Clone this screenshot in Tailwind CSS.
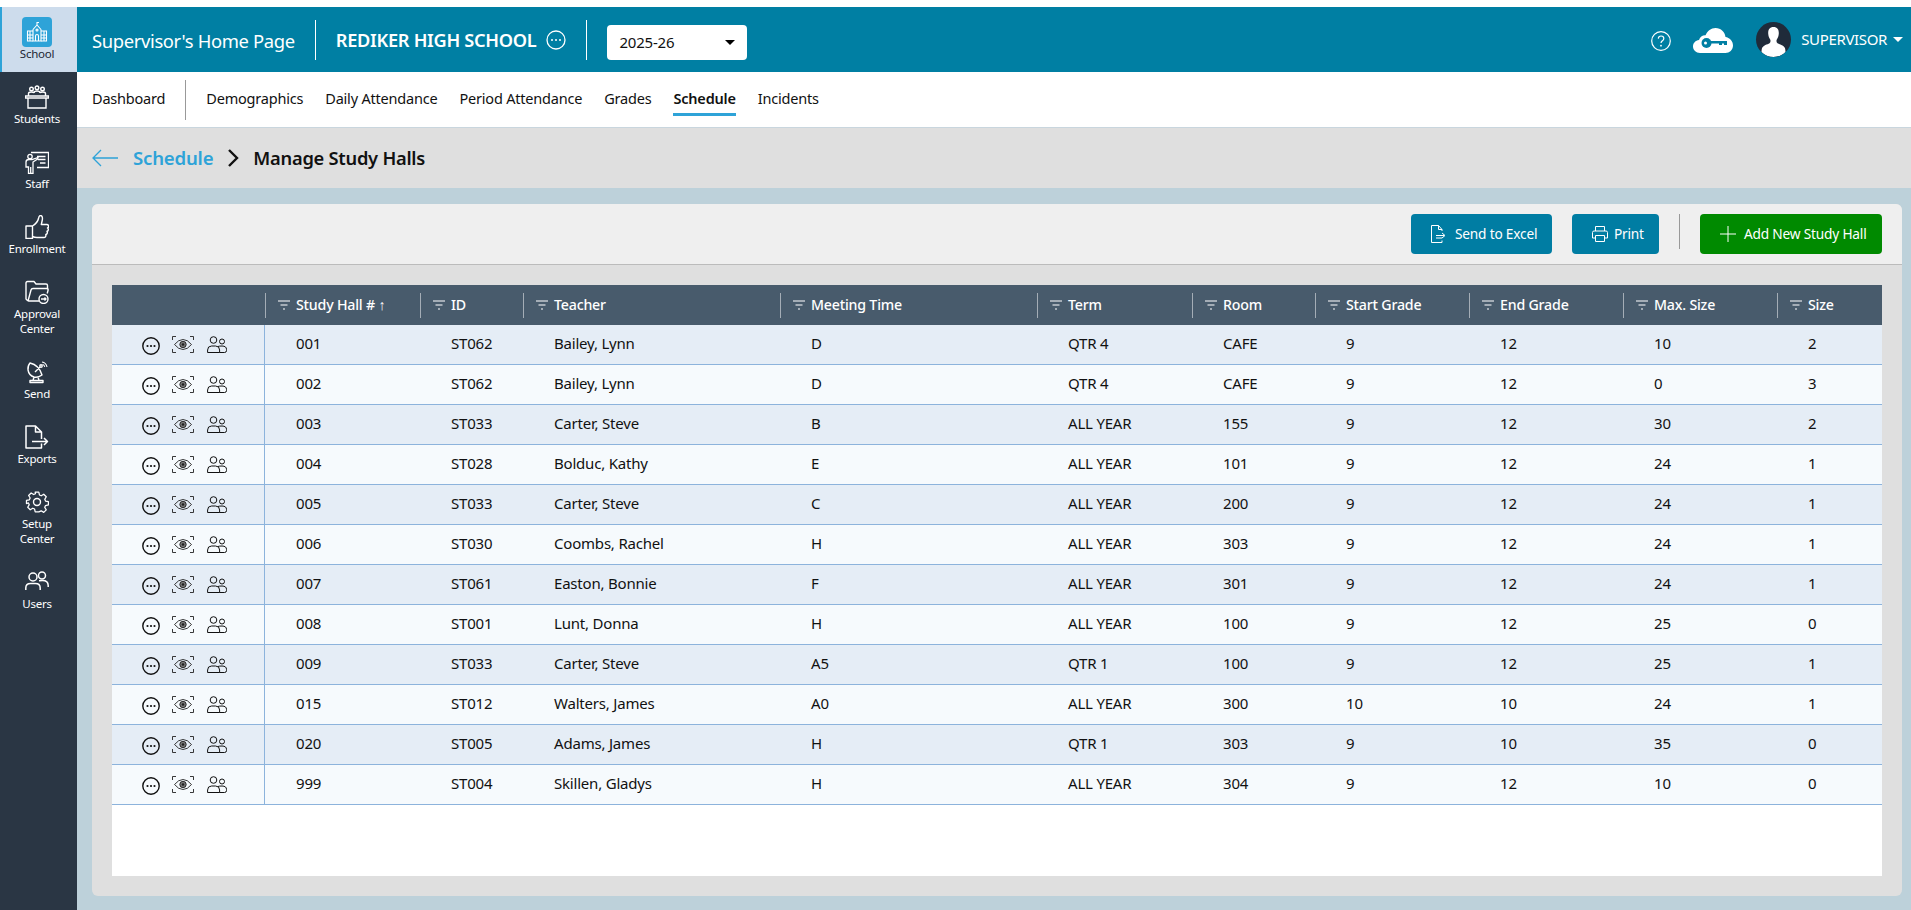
<!DOCTYPE html>
<html lang="en">
<head>
    <meta charset="UTF-8"/>
    <title>Manage Study Halls</title>
    <script src="https://cdn.jsdelivr.net/npm/@tailwindcss/browser@4"></script>
</head>
<body class="bg-white h-[910px] overflow-hidden pt-[7px] flex font-['Noto_Sans',sans-serif] text-[15px] text-[#111]">

<!-- left rail -->
<nav class="w-[77px] shrink-0 bg-[#2a3644] text-white text-[11.5px] leading-[15px] tracking-[-0.25px] text-center">
    <div class="h-[65px] bg-[#cddcec] border-l-2 border-[#2ea3d8] text-[#1c2733] pr-[5px] pt-[10px]">
        <div class="w-[30px] h-[30px] mx-auto rounded-[4px] bg-[#2ea3d8] flex items-center justify-center">
            <svg class="w-[24px] h-[24px]" viewBox="0 0 24 24" fill="none" stroke="white" stroke-width="1.100"><path d="M8 9.500 12 5l4 4.500M12 5V2.500h2M8 9.500V21h8V9.500"/><path d="M8 11H2.500v10H8M16 11h5.500v10H16M2.500 15h5.500M2.500 18h5.500M16 15h5.500M16 18h5.500M5 11v10M19 11v10M10.500 21v-5a1.500 1.500 0 0 1 3 0v5"/><circle cx="12" cy="10" r="1"/></svg>
        </div>
        <div class="-mt-[1px]">School</div>
    </div>
    <div class="pt-[13px] pb-[11px] pr-[3px]">
        <svg class="block mx-auto w-6 h-6" viewBox="0 0 24 24" fill="none" stroke="white" stroke-width="1.400"><circle cx="6.500" cy="4" r="1.800"/><circle cx="12" cy="2.800" r="1.800"/><circle cx="17.500" cy="4" r="1.800"/><path d="M3.500 11V8.500q0-1.500 3-1.500 2 0 2.500 1M9 8q0-2 3-2t3 2M15 8q.5-1 2.500-1 3 0 3 1.500V11M.5 11h23v2H.5zM3 13v10h18V13"/></svg>
        <div class="mt-[2px]">Students</div>
    </div>
    <div class="pt-[13px] pb-[11px] pr-[3px]">
        <svg class="block mx-auto w-6 h-6" viewBox="0 0 24 24" fill="none" stroke="white" stroke-width="1.300"><path d="M6 2.500h17.500v15H12M12 6.500h8.500M13 9.500h7.500M15 13h5.500"/><circle cx="5" cy="6.500" r="2.200"/><path d="M1 17v-5q0-2.500 3-2.500h3l6-2-.5 1.500L8 12v11.500H3.500V17zM5.700 17v6.500"/></svg>
        <div class="mt-[2px]">Staff</div>
    </div>
    <div class="pt-[13px] pb-[11px] pr-[3px]">
        <svg class="block mx-auto w-6 h-6" viewBox="0 0 24 24" fill="none" stroke="white" stroke-width="1.400" stroke-linejoin="round"><path d="M7.500 11H1v12.500h6.500zM7.500 11q5-3 6-7.500c.3-1.800 1-3 2-3 1.500 0 2.300 2 1.800 4.500l-1 4.500h5.500c2.200 0 2.200 3 .7 3.500 1.300.8 1 3-.5 3.300.8 1.200.2 3-1.200 3.200.4 1.500-.3 3-2 3H12q-2.500 0-4.500-1.200"/></svg>
        <div class="mt-[2px]">Enrollment</div>
    </div>
    <div class="pt-[13px] pb-[11px] pr-[3px]">
        <svg class="block mx-auto w-6 h-6" viewBox="0 0 24 24" fill="none" stroke="white" stroke-width="1.400" stroke-linejoin="round"><path d="M3 21 1 19V3q0-1.500 1.500-1.500H9L11 4h10q1.500 0 1.500 1.500V9"/><path d="M3 21l3-11q.4-1.500 2-1.500h13.500q2 0 1.500 2l-.8 3M3 21h11"/><circle cx="18.500" cy="19" r="4.500"/><path d="M16 19h5M19.500 17.500 21 19l-1.500 1.500"/></svg>
        <div class="mt-[2px]">Approval<br/>Center</div>
    </div>
    <div class="pt-[13px] pb-[11px] pr-[3px]">
        <svg class="block mx-auto w-6 h-6" viewBox="0 0 24 24" fill="none" stroke="white" stroke-width="1.400" stroke-linejoin="round"><path d="M5 3q9 2 12 12-4 3-8 2-5-1.500-6-7-.5-4 2-7zM10 12l5-5M9 17l-1 3.500M13 17l1 3.500M5 20.500h13v2H5z"/><circle cx="16" cy="6" r="1.200"/><path d="M17 2q4 .5 5 5M17.500 4.500q1.800.3 2.200 2.300" stroke-width="1.100"/></svg>
        <div class="mt-[2px]">Send</div>
    </div>
    <div class="pt-[13px] pb-[11px] pr-[3px]">
        <svg class="block mx-auto w-6 h-6" viewBox="0 0 24 24" fill="none" stroke="white" stroke-width="1.500" stroke-linejoin="round"><path d="M16.500 14V7l-6-6H1v22h15.500v-4.500M10.500 1v6h6"/><path d="M7 16.500h15M19 13l3.500 3.500L19 20"/></svg>
        <div class="mt-[2px]">Exports</div>
    </div>
    <div class="pt-[13px] pb-[11px] pr-[3px]">
        <svg class="block mx-auto w-6 h-6" viewBox="0 0 24 24" fill="none" stroke="white" stroke-width="1.400" stroke-linejoin="round"><circle cx="12" cy="12" r="3.500"/><path d="M10 1h4l.7 3.200 2 .9 2.800-1.700 2.800 2.800-1.700 2.800.9 2 3.200.7v3.500l-3.200.7-.9 2 1.700 2.800-2.800 2.800-2.800-1.700-2 .9L14 23h-4l-.7-3.200-2-.9-2.800 1.700-2.800-2.800 1.700-2.800-.9-2L.3 13.800v-3.500l3.200-.7.900-2-1.700-2.800 2.800-2.800 2.800 1.700 2-.9z" transform="translate(1.200 1.200) scale(.9)"/></svg>
        <div class="mt-[2px]">Setup<br/>Center</div>
    </div>
    <div class="pt-[13px] pb-[11px] pr-[3px]">
        <svg class="block mx-auto w-6 h-6" viewBox="0 0 24 24" fill="none" stroke="white" stroke-width="1.500"><circle cx="8" cy="7" r="4"/><circle cx="17" cy="5.500" r="3.500"/><path d="M.8 20v-2q0-4.500 4.700-4.500h5q4.700 0 4.700 4.500v2M14 10.700q1.300-.2 3.500-.2 5.700 0 5.700 5v1.500"/></svg>
        <div class="mt-[2px]">Users</div>
    </div>
</nav>

<div class="flex-1 min-w-0 flex flex-col bg-[#bdd1da]">
    <!-- top bar -->
    <header class="h-[65px] shrink-0 bg-[#007fa3] text-white flex items-center pl-[15px] pr-[8px]">
        <span class="text-[18.4px] tracking-[-0.35px] pt-[2px]">Supervisor's Home Page</span>
        <div class="w-px h-[40px] bg-white ml-[20px] mr-[20px]"></div>
        <span class="text-[18.200px] font-semibold tracking-[-0.3px] pt-[2px]">REDIKER HIGH SCHOOL</span>
        <svg class="w-[20px] h-[20px] ml-[10px] mt-[1px]" viewBox="0 0 20 20" fill="none" stroke="white" stroke-width="1.300"><circle cx="10" cy="10" r="9"/><circle cx="6" cy="10" r="1" fill="white" stroke="none"/><circle cx="10" cy="10" r="1" fill="white" stroke="none"/><circle cx="14" cy="10" r="1" fill="white" stroke="none"/></svg>
        <div class="w-px h-[40px] bg-white ml-[20px] mr-[20px]"></div>
        <div class="w-[140px] h-[35px] mt-[6px] bg-white rounded-[4px] text-[#111] flex items-center justify-between pl-[12px] pr-[12px]">
            <span class="tracking-[-0.2px]">2025-26</span>
            <span class="w-0 h-0 border-x-[5px] border-x-transparent border-t-[5px] border-t-black"></span>
        </div>
        <div class="ml-auto flex items-center">
            <svg class="w-[20px] h-[20px] mt-[2px]" viewBox="0 0 20 20" fill="none" stroke="white" stroke-width="1.200"><circle cx="10" cy="10" r="9.300"/><path d="M7.300 7.600C7.400 5.800 8.600 5 10.100 5c1.600 0 2.700 1 2.700 2.400 0 2.300-2.800 2.300-2.800 4.600"/><circle cx="10" cy="14.700" r=".9" fill="white" stroke="none"/></svg>
            <svg class="w-[40px] h-[25px] ml-[22px] mt-[1px]" viewBox="0 0 40 25"><path fill="white" d="M7 25C3 25 0 22 0 18.500S2.500 12.500 6 12c1-3 3.500-5 6.500-4.800C14.500 3 18 0 22.500 0c5.500 0 9.500 4 10 9 4 .5 7.500 4 7.500 8.500 0 4.500-3.500 7.500-7.500 7.500z"/><circle cx="13.500" cy="15" r="5" fill="#007fa3"/><circle cx="12.500" cy="15" r="1.500" fill="white"/><path fill="#007fa3" d="M17 13h17v4h-3v-1.500h-2V17h-3v-1.500h-9z"/></svg>
            <div class="w-[35px] h-[35px] rounded-full bg-[#1f2b3a] ml-[23px] overflow-hidden flex justify-center">
                <svg class="w-[35px] h-[35px]" viewBox="0 0 35 35"><path fill="white" d="M17.500 5c4 0 5.500 3 5.300 6.500-.1 2.500-1 4.500-2 6-.6 1.500-.4 3 .7 3.800 2 1.300 6.500 2 7.500 5 .4 1.500.5 3 .5 4-3 3-7 4.700-12 4.700s-9-1.700-12-4.700c0-1 .1-2.500.5-4 1-3 5.500-3.700 7.500-5 1.100-.8 1.300-2.300.7-3.800-1-1.500-1.900-3.500-2-6C12 8 13.500 5 17.500 5z"/></svg>
            </div>
            <span class="ml-[10px] tracking-[-0.35px] text-[15px]">SUPERVISOR</span>
            <span class="ml-[6px] w-0 h-0 border-x-[5px] border-x-transparent border-t-[5px] border-t-white"></span>
        </div>
    </header>

    <!-- sub nav -->
    <div class="h-[56px] shrink-0 bg-white border-b border-[#c9d6de] flex items-center pl-[15px] text-[14.500px] tracking-[-0.2px]">
        <span class="pb-[2px]">Dashboard</span>
        <div class="w-px h-[40px] bg-[#999] ml-[20px] mr-[20px]"></div>
        <div class="flex items-center gap-[22px] pb-[2px]">
            <span>Demographics</span>
            <span>Daily Attendance</span>
            <span>Period Attendance</span>
            <span>Grades</span>
            <span class="relative font-semibold">Schedule<span class="absolute left-0 right-0 top-[25px] h-[3px] bg-[#2ea3d8]"></span></span>
            <span>Incidents</span>
        </div>
    </div>

    <!-- breadcrumb -->
    <div class="h-[60px] shrink-0 bg-[#dfdfdf] flex items-center pl-[15px]">
        <svg class="w-[26px] h-[18px]" viewBox="0 0 26 18" fill="none" stroke="#2ea3d8" stroke-width="1.300"><path d="M26 9H1M9 1 1 9l8 8"/></svg>
        <span class="ml-[15px] text-[#2ea3d8] text-[18.600px] font-semibold tracking-[-0.2px]">Schedule</span>
        <svg class="ml-[14px] w-[12px] h-[18px]" viewBox="0 0 12 18" fill="none" stroke="#111" stroke-width="2.400"><path d="m2 1 8 8-8 8"/></svg>
        <span class="ml-[14px] text-[18.300px] font-semibold tracking-[-0.25px]">Manage Study Halls</span>
    </div>

    <!-- card -->
    <main class="flex-1 min-h-0 ml-[15px] mr-[9px] mt-[16px] mb-[14px] rounded-[6px] bg-[#dfdfdf] flex flex-col overflow-hidden">
        <div class="h-[61px] shrink-0 bg-[#efefef] border-b border-[#bbb] flex items-start pt-[10px] justify-end pr-[20px] text-white tracking-[-0.2px] text-[13.700px]">
            <div class="w-[141px] h-[40px] rounded-[4px] bg-[#007da3] flex items-center pl-[20px]">
                <svg class="w-[16px] h-[18px]" viewBox="0 0 16 18" fill="none" stroke="white" stroke-width="1"><path d="M11 6V4.500L7.500.5H.5v17H11v-2M7.500.5v4H11M5 10.500h8M11 8l3 2.500-3 2.500M5 13h6"/></svg>
                <span class="ml-[8px]">Send to Excel</span>
            </div>
            <div class="w-[87px] h-[40px] ml-[20px] rounded-[4px] bg-[#007da3] flex items-center pl-[20px]">
                <svg class="w-[16px] h-[16px]" viewBox="0 0 16 16" fill="none" stroke="white" stroke-width="1"><path d="M3.500 5V.5h9V5M3.500 12H.5V6.500Q.5 5 2 5h12q1.500 0 1.500 1.500V12h-3M3.500 9.500h9v6h-9z"/></svg>
                <span class="ml-[6px]">Print</span>
            </div>
            <div class="w-px h-[35px] bg-[#999] ml-[20px] mr-[20px]"></div>
            <div class="w-[182px] h-[40px] rounded-[4px] bg-[#008a00] flex items-center pl-[20px]">
                <svg class="w-[16px] h-[16px]" viewBox="0 0 16 16" fill="none" stroke="white" stroke-width="1"><path d="M8 0v16M0 8h16"/></svg>
                <span class="ml-[8px]">Add New Study Hall</span>
            </div>
        </div>
        <div class="flex-1 min-h-0 p-[20px]">
            <div class="h-full bg-white">
                <table class="w-full table-fixed border-separate border-spacing-0">
                    <colgroup>
                        <col class="w-[153px]"/><col class="w-[155px]"/><col class="w-[103px]"/><col class="w-[257px]"/><col class="w-[257px]"/><col class="w-[155px]"/><col class="w-[123px]"/><col class="w-[154px]"/><col class="w-[154px]"/><col class="w-[154px]"/><col class="w-[105px]"/>
                    </colgroup>
                    <thead>
                        <tr id="headRow" class="h-[40px] bg-[#485b6c] text-white text-left"></tr>
                    </thead>
                    <tbody id="rows"></tbody>
                </table>
            </div>
        </div>
    </main>
</div>

<script>
    const heads = ['Study Hall # ↑', 'ID', 'Teacher', 'Meeting Time', 'Term', 'Room', 'Start Grade', 'End Grade', 'Max. Size', 'Size'];
    const data = [
        ['001', 'ST062', 'Bailey, Lynn', 'D', 'QTR 4', 'CAFE', '9', '12', '10', '2'],
        ['002', 'ST062', 'Bailey, Lynn', 'D', 'QTR 4', 'CAFE', '9', '12', '0', '3'],
        ['003', 'ST033', 'Carter, Steve', 'B', 'ALL YEAR', '155', '9', '12', '30', '2'],
        ['004', 'ST028', 'Bolduc, Kathy', 'E', 'ALL YEAR', '101', '9', '12', '24', '1'],
        ['005', 'ST033', 'Carter, Steve', 'C', 'ALL YEAR', '200', '9', '12', '24', '1'],
        ['006', 'ST030', 'Coombs, Rachel', 'H', 'ALL YEAR', '303', '9', '12', '24', '1'],
        ['007', 'ST061', 'Easton, Bonnie', 'F', 'ALL YEAR', '301', '9', '12', '24', '1'],
        ['008', 'ST001', 'Lunt, Donna', 'H', 'ALL YEAR', '100', '9', '12', '25', '0'],
        ['009', 'ST033', 'Carter, Steve', 'A5', 'QTR 1', '100', '9', '12', '25', '1'],
        ['015', 'ST012', 'Walters, James', 'A0', 'ALL YEAR', '300', '10', '10', '24', '1'],
        ['020', 'ST005', 'Adams, James', 'H', 'QTR 1', '303', '9', '10', '35', '0'],
        ['999', 'ST004', 'Skillen, Gladys', 'H', 'ALL YEAR', '304', '9', '12', '10', '0'],
    ];

    const filterIcon = '<svg class="w-[12px] h-[10px] shrink-0" viewBox="0 0 12 10" fill="none" stroke="white" stroke-width="1.200"><path d="M0 1h12M2.500 5h7M5 9h2"/></svg>';

    const rowIcons = `<div class="flex items-center pl-[30px] pt-[2px]">
        <svg class="w-[18px] h-[18px]" viewBox="0 0 18 18" fill="none" stroke="#111" stroke-width="1.400"><circle cx="9" cy="9" r="8.200"/><circle cx="5.500" cy="9" r="1.100" fill="#111" stroke="none"/><circle cx="9" cy="9" r="1.100" fill="#111" stroke="none"/><circle cx="12.500" cy="9" r="1.100" fill="#111" stroke="none"/></svg>
        <svg class="w-[22px] h-[17px] ml-[12px] -mt-[2px]" viewBox="0 0 22 17" fill="none" stroke="#222" stroke-width=".9"><path d="M.5 4V.5H4M18 .5h3.500V4M.5 13v3.500H4M18 16.500h3.500V13"/><path d="M2.500 8.500Q6.500 3.500 11 3.500t8.500 5q-4 5-8.500 5t-8.500-5z"/><circle cx="11" cy="8.500" r="3.200" fill="#777"/><circle cx="11" cy="8.500" r="1.300" fill="#222" stroke="none"/></svg>
        <svg class="w-[20px] h-[17px] ml-[13px] -mt-[2px]" viewBox="0 0 20 17" fill="none" stroke="#111" stroke-width="1"><circle cx="6.500" cy="4" r="3.300"/><circle cx="15" cy="5.500" r="2.500"/><path d="M.6 16.500v-2.500q0-4 4-4h4q4 0 4 4v2.500zM11 10.500q1-.5 4-.5 4.500 0 4.500 3.500v1q0 2-2 2h-5"/></svg>
    </div>`;

    document.getElementById('headRow').innerHTML = '<th class="p-0"></th>' + heads.map(h =>
        `<th class="p-0 font-medium text-[14.200px]"><div class="h-[25px] border-l border-white/50 pl-[12px] flex items-center gap-[6px] tracking-[-0.2px] whitespace-nowrap">${filterIcon}<span class="pb-[1px]">${h}</span></div></th>`
    ).join('');

    document.getElementById('rows').innerHTML = data.map((row, i) =>
        `<tr class="h-[40px] ${i % 2 ? 'bg-[#f6fafd]' : 'bg-[#e5edf6]'}">
            <td class="p-0 border-b border-r border-[#8cb3dc]">${rowIcons}</td>
            ${row.map(v => `<td class="p-0 pl-[31px] pb-[3px] border-b border-[#8cb3dc] tracking-[-0.2px]">${v}</td>`).join('')}
        </tr>`
    ).join('');
</script>
</body>
</html>
